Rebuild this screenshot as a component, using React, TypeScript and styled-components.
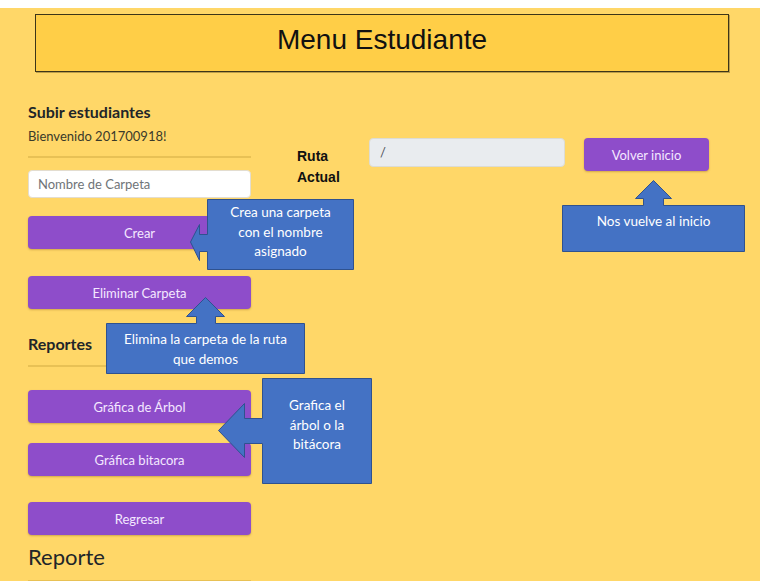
import React from "react";
import styled, { createGlobalStyle } from "styled-components";

const Global = createGlobalStyle`
  html, body { margin: 0; padding: 0; background: #ffffff; }
  body { padding-top: 8px; overflow: hidden; }
  * { box-sizing: border-box; }
`;

const UI_FONT = `Lato, "Noto Sans", sans-serif`;
const CALLOUT_FONT = `Lato, "Noto Sans", sans-serif`;

const Page = styled.div`
  position: relative;
  background: #ffd768;
  min-height: 573px;
  padding: 6px 0 0 0;
  font-family: ${UI_FONT};
  color: #212529;
`;

const Header = styled.div`
  margin-left: 35px;
  width: 694px;
  height: 58px;
  background: #ffce47;
  border: 1px solid #3d3518;
  box-shadow: 1px 1px 0 rgba(60, 50, 20, 0.35);
  display: flex;
  justify-content: center;
  padding-top: 9px;
`;

const Title = styled.h1`
  margin: 0;
  font-family: "Liberation Sans", Arial, sans-serif;
  font-weight: 400;
  font-size: 28px;
  line-height: 32px;
  color: #111;
`;

const Body = styled.div`
  display: flex;
  align-items: flex-start;
  gap: 46px;
  padding-left: 28px;
`;

const LeftCol = styled.div`
  width: 223px;
  display: flex;
  flex-direction: column;
  padding-top: 30px;
`;

const SectionTitle = styled.h5<{ $mt?: number }>`
  margin: ${(p) => p.$mt ?? 0}px 0 0 0;
  font-size: 16px;
  font-weight: 700;
  line-height: 20px;
  color: #212529;
`;

const Welcome = styled.p`
  margin: 5px 0 0 0;
  font-size: 13px;
  line-height: 18px;
  color: #3a3a2a;
`;

const Rule = styled.hr<{ $mt: number }>`
  margin: ${(p) => p.$mt}px 0 0 0;
  border: 0;
  border-top: 2px solid #e8c155;
  width: 100%;
`;

const TextInput = styled.input`
  margin-top: 12px;
  width: 100%;
  height: 28px;
  border: 1px solid #e3ddd0;
  border-radius: 4px;
  background: #fff;
  padding: 0 9px;
  font-family: ${UI_FONT};
  font-size: 13px;
  color: #495057;
  outline: none;
  &::placeholder { color: #6f7478; }
`;

const PurpleButton = styled.button<{ $mt: number; $w?: number }>`
  margin-top: ${(p) => p.$mt}px;
  width: ${(p) => (p.$w ? `${p.$w}px` : "100%")};
  height: 33px;
  border: 0;
  border-radius: 4px;
  background: #8e4dca;
  color: #f4e8ff;
  font-family: ${UI_FONT};
  font-size: 13px;
  box-shadow: 0 1px 2px rgba(120, 80, 20, 0.35);
  flex-shrink: 0;
`;

const BigTitle = styled.h3`
  margin: 8px 0 0 0;
  font-size: 22px;
  font-weight: 400;
  line-height: 28px;
  color: #212529;
`;

const Middle = styled.div`
  display: flex;
  align-items: flex-start;
  margin-top: 66px;
`;

const RouteLabel = styled.div`
  width: 72px;
  padding-right: 20px;
  margin-top: 8px;
  font-family: "Liberation Sans", Arial, sans-serif;
  font-weight: 700;
  font-size: 14px;
  line-height: 21px;
  color: #111;
`;

const RouteInput = styled.div`
  width: 196px;
  height: 29px;
  background: #e9ecef;
  border: 1px solid #dcdcd4;
  border-radius: 4px;
  padding: 4px 10px;
  font-size: 13px;
  color: #495057;
  line-height: 19px;
`;

const RightGroup = styled.div`
  margin-left: 19px;
`;

/* ---- annotation callouts (overlay) ---- */
const CalloutWrap = styled.div<{ $x: number; $y: number; $w: number; $h: number }>`
  position: absolute;
  left: ${(p) => p.$x}px;
  top: ${(p) => p.$y}px;
  width: ${(p) => p.$w}px;
  height: ${(p) => p.$h}px;
`;

const CalloutShape = styled.svg`
  position: absolute;
  inset: 0;
  overflow: visible;
`;

const CalloutText = styled.div<{ $x: number; $y: number; $w: number }>`
  position: absolute;
  left: ${(p) => p.$x}px;
  top: ${(p) => p.$y}px;
  width: ${(p) => p.$w}px;
  text-align: center;
  font-family: ${CALLOUT_FONT};
  font-size: 13.5px;
  line-height: 19.7px;
  color: #ffffff;
`;

type CalloutProps = {
  x: number;
  y: number;
  w: number;
  h: number;
  path: string;
  textX: number;
  textY: number;
  textW: number;
  children: React.ReactNode;
};

const Callout = ({ x, y, w, h, path, textX, textY, textW, children }: CalloutProps) => (
  <CalloutWrap $x={x} $y={y} $w={w} $h={h}>
    <CalloutShape width={w} height={h} viewBox={`0 0 ${w} ${h}`}>
      <path d={path} fill="#4472c4" stroke="#2f528f" strokeWidth={1} />
    </CalloutShape>
    <CalloutText $x={textX} $y={textY} $w={textW}>
      {children}
    </CalloutText>
  </CalloutWrap>
);

export default function App() {
  return (
    <>
      <Global />
      <Page>
        <Header>
          <Title>Menu Estudiante</Title>
        </Header>
        <Body>
          <LeftCol>
            <SectionTitle>Subir estudiantes</SectionTitle>
            <Welcome>Bienvenido 201700918!</Welcome>
            <Rule $mt={11} />
            <TextInput placeholder="Nombre de Carpeta" />
            <PurpleButton $mt={18}>Crear</PurpleButton>
            <PurpleButton $mt={27}>Eliminar Carpeta</PurpleButton>
            <SectionTitle $mt={25}>Reportes</SectionTitle>
            <Rule $mt={11} />
            <PurpleButton $mt={23}>Gráfica de Árbol</PurpleButton>
            <PurpleButton $mt={20}>Gráfica bitacora</PurpleButton>
            <PurpleButton $mt={26}>Regresar</PurpleButton>
            <BigTitle>Reporte</BigTitle>
            <Rule $mt={9} />
          </LeftCol>
          <Middle>
            <RouteLabel>Ruta Actual</RouteLabel>
            <RouteInput>/</RouteInput>
            <RightGroup>
              <PurpleButton $mt={0} $w={125}>Volver inicio</PurpleButton>
            </RightGroup>
          </Middle>
        </Body>

        {/* Crea una carpeta */}
        <Callout
          x={190}
          y={191}
          w={164}
          h={71}
          path="M17.5 0.5 H163.5 V70.5 H17.5 V52.5 H9.5 V61.5 L0.5 43 L9.5 25.5 V35.5 H17.5 Z"
          textX={17}
          textY={4}
          textW={147}
        >
          Crea una carpeta
          <br />
          con el nombre
          <br />
          asignado
        </Callout>

        {/* Nos vuelve al inicio */}
        <Callout
          x={562}
          y={172}
          w={183}
          h={72}
          path="M0.5 25.5 H81.5 V18.5 H73.5 L91.5 0.5 L109.5 18.5 H101.5 V25.5 H182.5 V71.5 H0.5 Z"
          textX={0}
          textY={32}
          textW={183}
        >
          Nos vuelve al inicio
        </Callout>

        {/* Elimina la carpeta */}
        <Callout
          x={106}
          y={289}
          w={199}
          h={77}
          path="M0.5 26.5 H90.5 V19.5 H80.5 L99.5 0.5 L118.5 19.5 H109.5 V26.5 H198.5 V76.5 H0.5 Z"
          textX={0}
          textY={33}
          textW={199}
        >
          Elimina la carpeta de la ruta
          <br />
          que demos
        </Callout>

        {/* Grafica el árbol */}
        <Callout
          x={218}
          y={370}
          w={154}
          h={106}
          path="M44.5 0.5 H153.5 V105.5 H44.5 V65.5 H26.5 V79.5 L0.5 52.5 L26.5 25.5 V40.5 H44.5 Z"
          textX={44}
          textY={18}
          textW={110}
        >
          Grafica el
          <br />
          árbol o la
          <br />
          bitácora
        </Callout>
      </Page>
    </>
  );
}
